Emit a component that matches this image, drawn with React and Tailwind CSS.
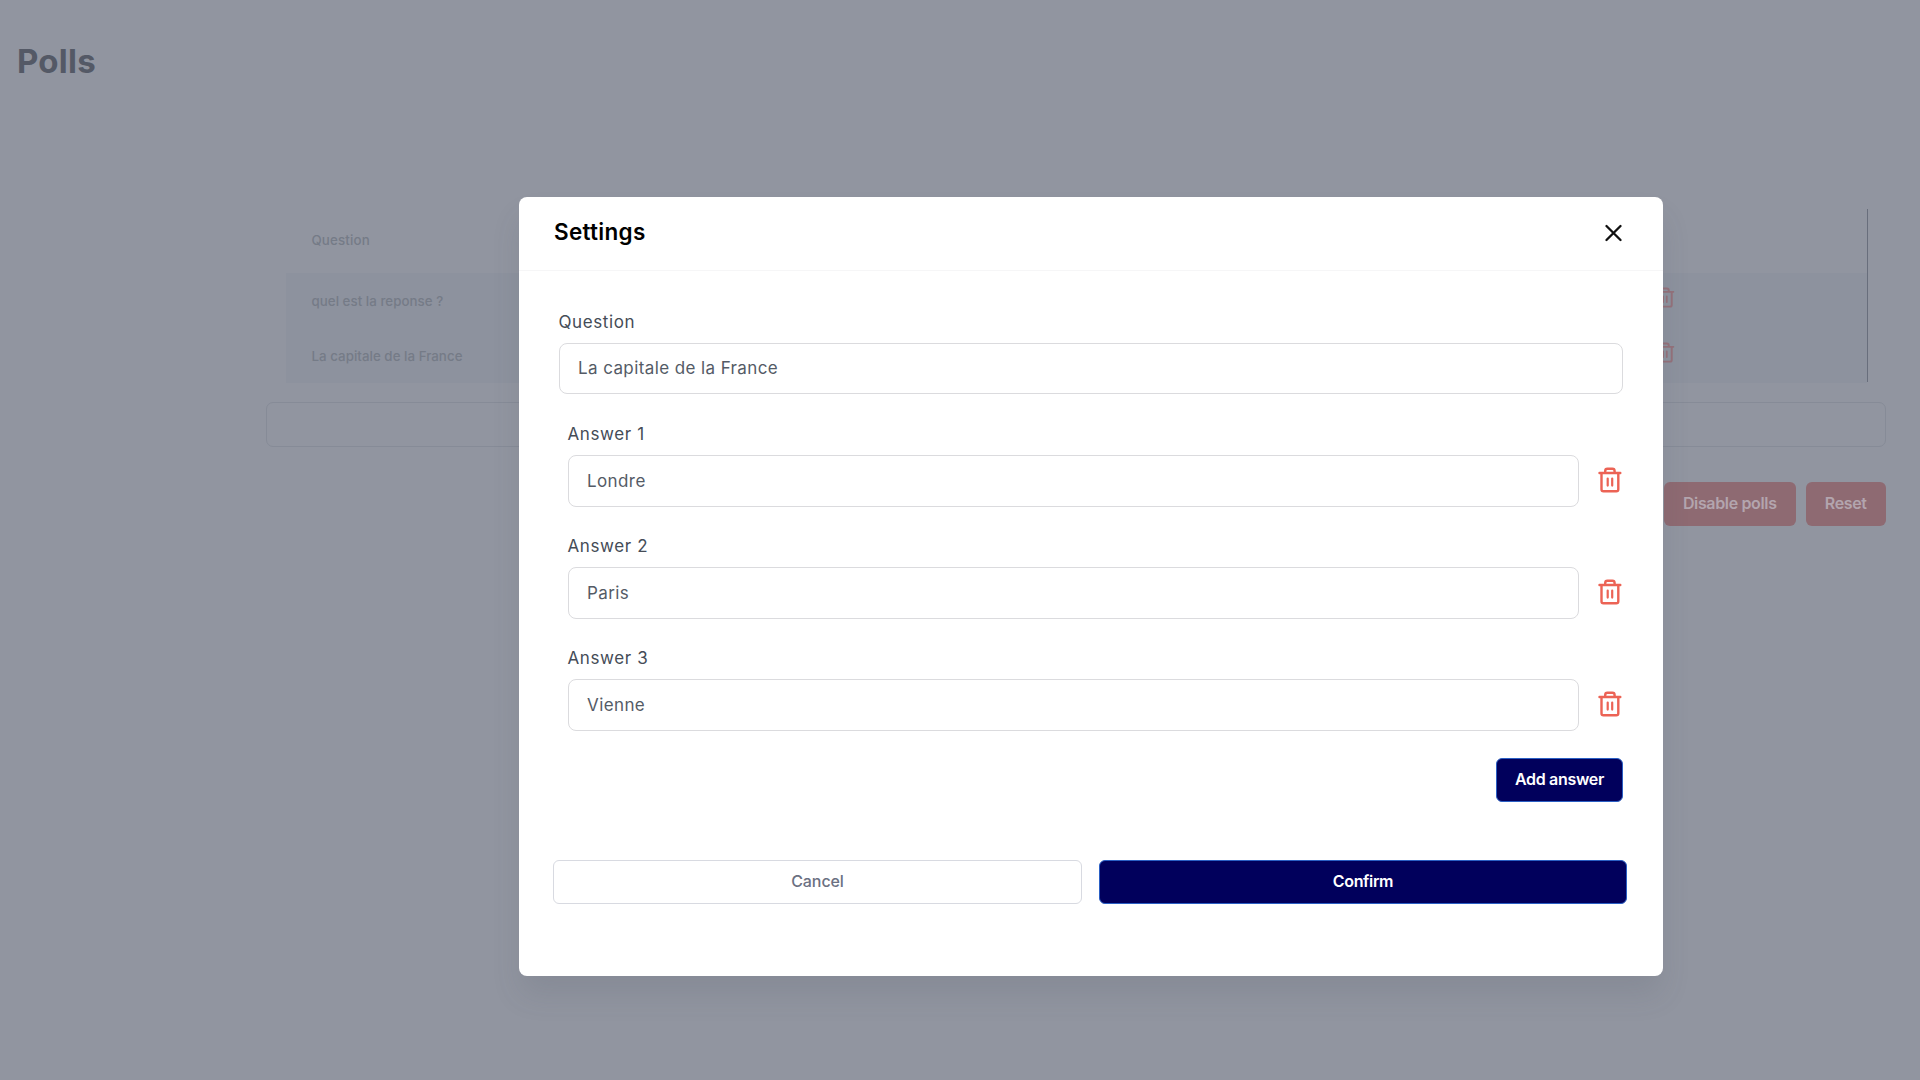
import React from "react";

function TrashIcon({ className }) {
  return (
    <svg viewBox="0 0 24 26" fill="none" stroke="currentColor" strokeLinecap="round" strokeLinejoin="round" className={className}>
      <path strokeWidth="2.400" d="M1.500 6h20.800M3.500 6v16.200c0 1.200.8 2.100 2 2.100h12.800c1.200 0 2-.9 2-2.100V6M7.200 5.800V4c0-1.300.9-2.200 2.200-2.200h5c1.300 0 2.200.9 2.200 2.200v1.800" />
      <path strokeWidth="2.200" d="M9.700 11.600v7M14.200 11.600v7" />
    </svg>
  );
}

function PollRow({ text }) {
  return (
    <div className="flex h-[55px] items-center justify-between pl-[25.500px] pr-[192px]">
      <span className="text-[13.300px] leading-5 font-medium tracking-[0.040px] text-[#757b87]">{text}</span>
      <TrashIcon className="mb-[6px] h-[21px] w-[20px] text-[#94717a]" />
    </div>
  );
}

function Answer({ label, value }) {
  return (
    <div className="h-[112px] pl-[9px]">
      <div className="h-[32px] text-[17px] leading-[23px] tracking-[0.6px] text-[#454c57]">{label}</div>
      <div className="flex items-center">
        <div className="flex h-[52px] w-[1011.500px] items-center rounded-[8px] border-[1.500px] border-[#dbdbde] pt-px pl-[18.500px] text-[17px] tracking-[0.4px] text-[#545b66]">
          {value}
        </div>
        <TrashIcon className="mb-[2px] ml-[19px] h-[26px] w-[24px] text-[#ec6355]" />
      </div>
    </div>
  );
}

export default function App() {
  return (
    <div className="relative h-[1080px] w-[1920px] overflow-hidden bg-[#9195a0] font-['Inter',sans-serif]">
      <h1 className="ml-[17px] pt-[41px] text-[33px] leading-[40px] font-bold tracking-[0.250px] text-[#545966]">Polls</h1>
      <section className="mt-[128px] ml-[266px] w-[1620px]">
        <div className="mr-[18px] ml-[20px] h-[173px] border-r-[1.500px] border-[#686e7c]">
          <div className="flex h-[64px] items-center pl-[25.500px] text-[13.300px] font-medium tracking-[0.150px] text-[#757b87]">Question</div>
          <div className="bg-[#8d929e]">
            <PollRow text="quel est la reponse ?" />
            <PollRow text="La capitale de la France" />
          </div>
        </div>
        <div className="mt-[20px] h-[45px] rounded-[7px] border border-[#868b97]" />
        <div className="mt-[35px] flex justify-end gap-[9.500px] text-[16px] font-semibold tracking-[-0.350px] text-[#b3a5ae]">
          <div className="flex h-[44px] w-[132.500px] items-center justify-center rounded-[6px] bg-[#8e6a72] pb-[3px]">Disable polls</div>
          <div className="flex h-[44px] w-[80.500px] items-center justify-center rounded-[6px] bg-[#8e6a72] pb-[3px]">Reset</div>
        </div>
      </section>

      <div role="dialog" className="absolute top-[197px] left-[518.500px] h-[778.500px] w-[1144.500px] rounded-[8px] bg-white shadow-[0_20px_30px_-2px_rgba(70,75,90,0.14)]">
        <header className="flex h-[74px] items-center justify-between border-b-[1.500px] border-[#f6f6f7] pr-[41px] pb-[2px] pl-[35.500px]">
          <h2 className="pb-[2px] text-[22.500px] leading-[28px] font-semibold tracking-[0.300px] text-black">Settings</h2>
          <svg viewBox="0 0 18 18" className="h-[18px] w-[18px]" fill="none" stroke="#111" strokeWidth="2.300" strokeLinecap="round">
            <path d="M2.500 2l14 14M16.500 2L2.500 16" />
          </svg>
        </header>
        <div className="pt-[39px] pr-[40px] pl-[40px]">
          <div className="h-[33px] text-[17px] leading-[25px] tracking-[0.6px] text-[#454c57]">Question</div>
          <div className="flex h-[51px] w-[1064px] items-center rounded-[8px] border-[1.500px] border-[#dbdbde] pl-[18.500px] text-[17px] tracking-[0.4px] text-[#545b66]">
            La capitale de la France
          </div>
          <div className="h-[364px] pt-[29px]">
            <Answer label="Answer 1" value="Londre" />
            <Answer label="Answer 2" value="Paris" />
            <Answer label="Answer 3" value="Vienne" />
          </div>
          <div className="flex justify-end">
            <div className="flex h-[44px] w-[127px] items-center justify-center rounded-[6px] border border-[#2a5fc4] bg-[#01005c] pb-[2px] text-[16px] font-semibold tracking-[-0.300px] text-white">Add answer</div>
          </div>
        </div>
        <footer className="mt-[58px] flex gap-[17px] pl-[34.500px] text-[16px]">
          <div className="flex h-[44px] w-[529px] items-center justify-center rounded-[6px] border-[1.500px] border-[#d8dae1] pb-[2px] font-medium tracking-[-0.1px] text-[#6b7082]">Cancel</div>
          <div className="flex h-[44px] w-[528px] items-center justify-center rounded-[6px] border border-[#2a5fc4] bg-[#01005c] pb-[2px] font-semibold tracking-[-0.350px] text-white">Confirm</div>
        </footer>
      </div>
    </div>
  );
}
